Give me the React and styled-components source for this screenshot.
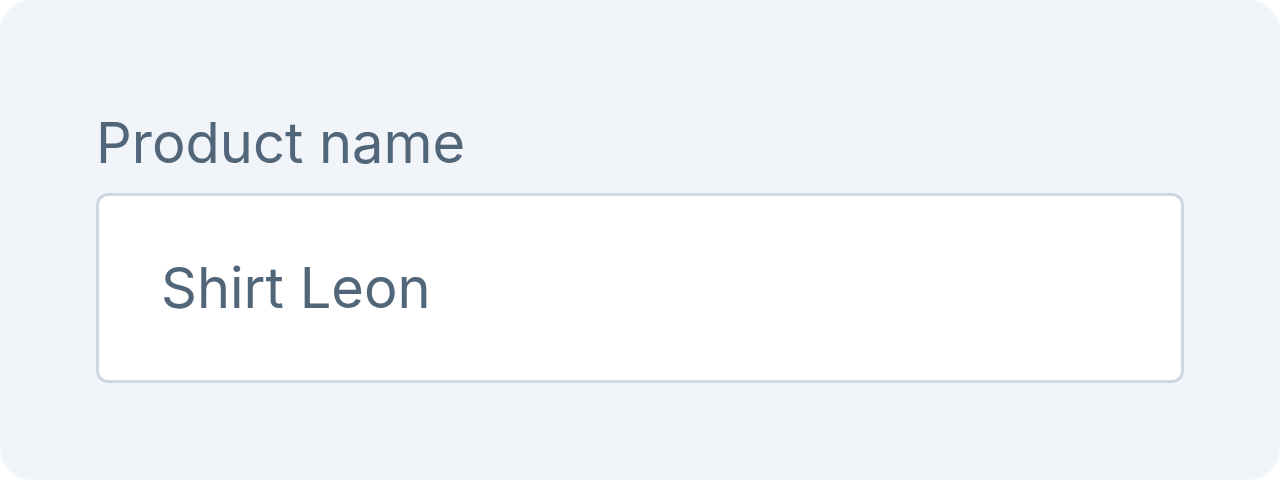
import React from "react";
import styled, { createGlobalStyle } from "styled-components";

const Global = createGlobalStyle`
  html, body { margin: 0; padding: 0; background: #ffffff; }
  * { box-sizing: border-box; }
`;

const Panel = styled.div`
  width: 1280px;
  height: 480px;
  background: #f1f5f9;
  border-radius: 32px;
  padding: 109px 96px 0 96px;
  font-family: Inter, "Noto Sans", sans-serif;
  display: flex;
  flex-direction: column;
`;

const Field = styled.label`
  display: flex;
  flex-direction: column;
  gap: 16px;
`;

const Label = styled.span`
  font-size: 56px;
  line-height: 68px;
  color: #52667a;
  font-weight: 400;
`;

const Input = styled.input`
  width: 100%;
  height: 190px;
  border: 3px solid #cfd8e2;
  border-radius: 12px;
  background: #ffffff;
  padding: 0 62px;
  font-family: Inter, "Noto Sans", sans-serif;
  font-size: 56px;
  color: #52667a;
  outline: none;
`;

export default function App() {
  return (
    <>
      <Global />
      <Panel>
        <Field>
          <Label>Product name</Label>
          <Input defaultValue="Shirt Leon" />
        </Field>
      </Panel>
    </>
  );
}
